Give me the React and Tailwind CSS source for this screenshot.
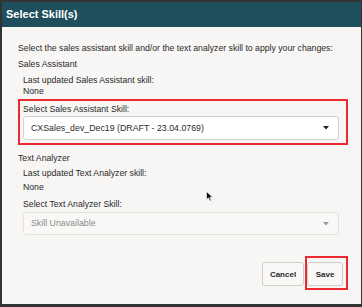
import React from "react";

// small filled caret used by the select boxes
const Caret = ({ color }) => (
  <svg width="6" height="4" viewBox="0 0 6 4" className="shrink-0">
    <path d="M0 0 L6 0 L3 3.5 Z" fill={color} />
  </svg>
);

const SelectBox = ({ value, disabled }) => (
  <div
    className={`flex items-center justify-between pl-[7px] pr-[9px] rounded-[3px] border ${
      disabled
        ? "h-[23px] bg-[#f9f8f6] border-[#e4e2df] text-[#8a8a8a]"
        : "h-[24px] bg-white border-[#d4d2cf] text-[#2b2b2b]"
    }`}
  >
    <span className="text-[8.8px] leading-[11px]">{value}</span>
    <Caret color={disabled ? "#9a9a9a" : "#222"} />
  </div>
);

export default function App() {
  return (
    <div
      className="relative w-[362px] h-[307px] flex flex-col border-l-2 border-t-2 border-r border-b-[3px] border-[#333] bg-[#f7f6f4] text-[#2a2a2a] overflow-hidden"
      style={{ fontFamily: '"Liberation Sans", Arial, sans-serif' }}
    >
      {/* header */}
      <div className="h-[25px] shrink-0 flex items-center pl-[4px] bg-[#1f4e5d]">
        <h1 className="text-[11px] font-bold text-white leading-none">Select Skill(s)</h1>
      </div>

      {/* body */}
      <div className="flex flex-col pl-[16px] pr-[13px] text-[8.7px] leading-[11px]">
        <p className="mt-[16px]">
          Select the sales assistant skill and/or the text analyzer skill to apply your changes:
        </p>
        <p className="mt-[5px]">Sales Assistant</p>
        <p className="mt-[5px] pl-[5px]">Last updated Sales Assistant skill:</p>
        <p className="pl-[5px]">None</p>

        <div className="mt-[2px] h-[46px] border-2 border-[#ea2a2f] pl-[3px] pr-[7px] pt-[3px]">
          <p>Select Sales Assistant Skill:</p>
          <div className="mt-[1px]">
            <SelectBox value="CXSales_dev_Dec19 (DRAFT - 23.04.0769)" />
          </div>
        </div>

        <p className="mt-[8px]">Text Analyzer</p>
        <p className="mt-[4px] pl-[5px]">Last updated Text Analyzer skill:</p>
        <p className="mt-[3px] pl-[5px]">None</p>
        <p className="mt-[6px] pl-[5px]">Select Text Analyzer Skill:</p>
        <div className="mt-[2px] ml-[5px] mr-[9px]">
          <SelectBox value="Skill Unavailable" disabled />
        </div>

        {/* footer buttons */}
        <div className="mt-[21px] flex justify-end items-start">
          <button className="mt-[6px] w-[42px] h-[24px] rounded-[3px] border border-[#cfcdca] bg-[#f9f8f6] text-[8px] font-bold text-[#2a2a2a]">
            Cancel
          </button>
          <div className="ml-[1px] border-2 border-[#ea2a2f] pt-[4px] pr-[3px] pb-[2px]">
            <button className="w-[36px] h-[24px] rounded-[3px] border border-[#cfcdca] bg-[#f9f8f6] text-[8px] font-bold text-[#2a2a2a]">
              Save
            </button>
          </div>
        </div>
      </div>

      {/* mouse pointer over the dialog */}
      <svg
        className="absolute left-[204px] top-[189px]"
        width="8"
        height="11"
        viewBox="0 0 8 11"
      >
        <path d="M0.5 0.5 L0.5 8.5 L2.5 6.8 L4 10 L5.3 9.4 L3.9 6.3 L6.6 6.3 Z" fill="#111" stroke="#fff" strokeWidth="0.6" />
      </svg>
    </div>
  );
}
